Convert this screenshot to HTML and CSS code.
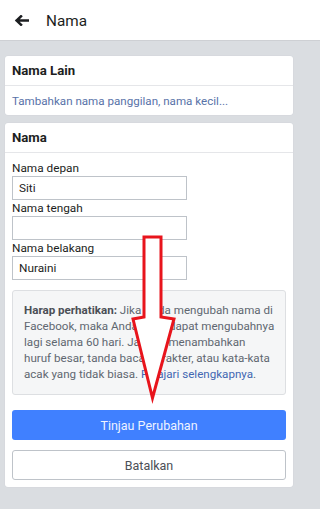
FILE: index.html
```html
<!DOCTYPE html>
<html lang="id">
<head>
<meta charset="utf-8">
<title>Nama</title>
<link rel="stylesheet" href="styles.css">
</head>
<body>
<header class="topbar">
  <svg class="back" width="15" height="11" viewBox="0 0 15 11" aria-hidden="true">
    <path d="M14 5.5H3M7 1.3L2.6 5.5L7 9.7" fill="none" stroke="#1c1e21" stroke-width="2.5" stroke-linecap="square" stroke-linejoin="miter"/>
  </svg>
  <h1 class="title">Nama</h1>
</header>
<main class="page">
  <section class="card">
    <div class="card-head">Nama Lain</div>
    <div class="card-link"><a href="#">Tambahkan nama panggilan, nama kecil...</a></div>
  </section>
  <section class="card">
    <div class="card-head">Nama</div>
    <div class="card-body">
      <label class="field">
        <span class="label">Nama depan</span>
        <span class="input">Siti</span>
      </label>
      <label class="field">
        <span class="label">Nama tengah</span>
        <span class="input"></span>
      </label>
      <label class="field">
        <span class="label">Nama belakang</span>
        <span class="input">Nuraini</span>
      </label>
      <div class="notice">
        <b>Harap perhatikan:</b> Jika Anda mengubah nama di Facebook, maka Anda tidak dapat mengubahnya lagi selama 60 hari. Jangan menambahkan huruf besar, tanda baca, karakter, atau kata-kata acak yang tidak biasa. <a href="#">Pelajari selengkapnya</a>.
      </div>
      <button class="btn btn-primary">Tinjau Perubahan</button>
      <button class="btn btn-secondary">Batalkan</button>
    </div>
  </section>
</main>
<svg class="annot" width="300" height="509" viewBox="0 0 300 509" aria-hidden="true">
  <polygon points="144,237 161,237 161,317 174,319 152.5,398 133,319 144,317" fill="#fff" stroke="#e8141c" stroke-width="3" stroke-linejoin="miter"/>
</svg>
</body>
</html>
```
FILE: styles.css
```css
* { box-sizing: border-box; }
html, body { margin: 0; padding: 0; }
body {
  background: #dadde1;
  font-family: Roboto, "Noto Sans", "Liberation Sans", sans-serif;
  color: #1c1e21;
  min-height: 509px;
  position: relative;
  overflow: hidden;
}
.topbar {
  height: 41px;
  background: #fff;
  border-bottom: 1px solid #ced0d4;
  display: flex;
  align-items: center;
  padding: 1px 0 0 14px;
  gap: 17px;
}
.back { display: block; }
.title {
  margin: 0;
  font-size: 15.3px;
  font-weight: 400;
  color: #1c1e21;
}
.page {
  width: 300px;
  padding: 15px 7px 0 5px;
  display: flex;
  flex-direction: column;
  gap: 8px;
}
.card {
  background: #fff;
  border-radius: 3px;
  box-shadow: 0 0 0 0.5px #d3d6db;
}
.card-head {
  height: 30px;
  display: flex;
  align-items: center;
  padding: 0 7px;
  font-size: 13.2px;
  font-weight: 700;
  border-bottom: 1px solid #e5e6e9;
}
.card-link {
  height: 29px;
  display: flex;
  align-items: center;
  padding: 0 7px;
  font-size: 11.6px;
}
.card-link a { color: #5872a8; text-decoration: none; }
.card-body {
  padding: 7px 7px 7px;
  display: flex;
  flex-direction: column;
}
.field { display: flex; flex-direction: column; }
.label {
  font-size: 11.8px;
  line-height: 16px;
  color: #1c1e21;
}
.input {
  width: 175px;
  height: 24px;
  border: 1px solid #bec3c9;
  font-size: 11.8px;
  line-height: 22px;
  padding-left: 6px;
  color: #1c1e21;
}
.notice {
  margin-top: 10px;
  background: #f5f6f7;
  border: 1px solid #dddfe2;
  border-radius: 3px;
  padding: 11px 10px 12px 11px;
  font-size: 11.6px;
  line-height: 16px;
  color: #606770;
}
.notice b { color: #4b4f56; }
.notice a { color: #4267b2; text-decoration: none; }
.btn {
  display: block;
  width: 100%;
  height: 30px;
  border-radius: 3px;
  font-family: inherit;
  font-size: 12.5px;
  padding: 0;
}
.btn-primary {
  margin-top: 15px;
  background: #4080ff;
  border: none;
  color: #eef3ff;
}
.btn-secondary {
  margin-top: 10px;
  background: #fff;
  border: 1px solid #bec3c9;
  color: #4b4f56;
}
.annot {
  position: absolute;
  left: 0;
  top: 0;
  pointer-events: none;
}
```
